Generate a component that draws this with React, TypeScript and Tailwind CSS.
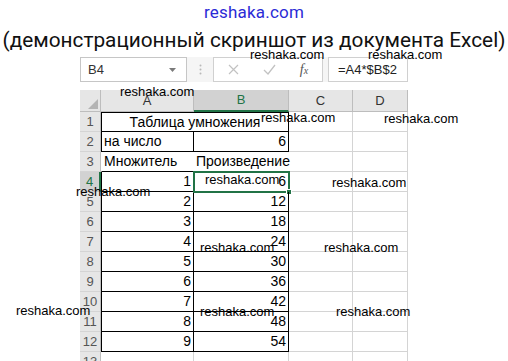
import React from "react";

const cellFont = "font-['Liberation_Sans',Arial,sans-serif]";

function Watermark({ x, y }: { x: number; y: number }) {
  return (
    <div
      className="absolute text-[13px] leading-[13px] text-black whitespace-nowrap font-['Liberation_Sans',Arial,sans-serif] pointer-events-none"
      style={{ left: x, top: y }}
    >
      reshaka.com
    </div>
  );
}

function RowHeader({ n, selected }: { n: number; selected?: boolean }) {
  return selected ? (
    <div className="w-[21px] h-[20px] box-border border-b border-b-[#c8c8c8] border-r-2 border-r-[#217346] bg-[#d2d2d2] flex items-center justify-center text-[13px] text-[#217346]">
      {n}
    </div>
  ) : (
    <div className="w-[21px] h-[20px] box-border border-b border-b-[#d4d4d4] border-r border-r-[#bdbdbd] bg-[#e6e6e6] flex items-center justify-center text-[13px] text-[#555555]">
      {n}
    </div>
  );
}

function GreyCells() {
  return (
    <>
      <div className="w-[64px] h-[20px] box-border border-r border-b border-r-[#d4d4d4] border-b-[#d4d4d4]" />
      <div className="w-[55px] h-[20px] box-border border-r border-b border-r-[#d4d4d4] border-b-[#d4d4d4]" />
    </>
  );
}

function DataRow({ n, a, b }: { n: number; a: number; b: number }) {
  const sel = n === 4;
  return (
    <div className="flex">
      <RowHeader n={n} selected={sel} />
      <div className="w-[93px] h-[20px] box-border border-l border-r border-b border-l-black border-r-black border-b-black flex items-center justify-end pr-[2px] text-[14px]">
        {a}
      </div>
      <div className="relative w-[95px] h-[20px] box-border border-r border-b border-r-black border-b-black flex items-center justify-end pr-[2px] text-[14px]">
        {b}
        {sel && (
          <div className="absolute left-[-1px] top-[-1px] right-[-2px] bottom-[-2px] border-2 border-[#217346]">
            <div className="absolute right-[-4px] bottom-[-4px] w-[6px] h-[6px] bg-[#217346] border border-white" />
          </div>
        )}
      </div>
      <GreyCells />
    </div>
  );
}

export default function App() {
  const data = [1, 2, 3, 4, 5, 6, 7, 8, 9];
  return (
    <div className="relative w-[508px] h-[361px] overflow-hidden bg-white">
      <div className="h-[24px] flex items-center justify-center">
        <span className="text-[17px] leading-none text-[#2b2bd6] font-['Roboto',sans-serif] tracking-[0.2px]">
          reshaka.com
        </span>
      </div>
      <div className="h-[33px] flex items-center justify-center">
        <span className="text-[20.8px] leading-none text-[#111111] whitespace-nowrap font-['Roboto',sans-serif]">
          (демонстрационный скриншот из документа Excel)
        </span>
      </div>

      <div className={`ml-[80px] w-[328px] ${cellFont}`}>
        {/* formula bar */}
        <div className="flex h-[25px] bg-[#f5f5f5]">
          <div className="w-[107px] box-border border border-[#c6c6c6] bg-white flex items-center justify-between pl-[7px] pr-[10px] text-[13px] text-[#333333]">
            <span>B4</span>
            <svg width="7" height="4" viewBox="0 0 7 4">
              <path d="M0 0 L7 0 L3.5 4 Z" fill="#7a7a7a" />
            </svg>
          </div>
          <div className="w-[26px] flex items-center justify-center">
            <svg width="3" height="11" viewBox="0 0 3 11">
              <circle cx="1.5" cy="1.5" r="1" fill="#b9b9b9" />
              <circle cx="1.5" cy="5.5" r="1" fill="#b9b9b9" />
              <circle cx="1.5" cy="9.5" r="1" fill="#b9b9b9" />
            </svg>
          </div>
          <div className="w-[110px] box-border border border-[#d0d0d0] bg-white flex items-center">
            <div className="w-[38px] flex justify-center">
              <svg width="11" height="11" viewBox="0 0 11 11">
                <path d="M1 1 L10 10 M10 1 L1 10" stroke="#c2c2c2" strokeWidth="1.2" />
              </svg>
            </div>
            <div className="w-[34px] flex justify-center">
              <svg width="13" height="11" viewBox="0 0 13 11">
                <path d="M1 6 L5 10 L12 1" stroke="#c2c2c2" strokeWidth="1.3" fill="none" />
              </svg>
            </div>
            <div className="w-[36px] flex justify-center">
              <span className="italic text-[14px] text-[#555555] font-['Liberation_Serif',serif] leading-none">
                f<span className="text-[10px]">x</span>
              </span>
            </div>
          </div>
          <div className="w-[5px]" />
          <div className="w-[80px] box-border border border-[#d0d0d0] bg-white flex items-center pl-[9px] text-[13px] text-[#222222]">
            =A4*$B$2
          </div>
        </div>

        <div className="h-[8px]" />

        {/* column headers */}
        <div className="flex h-[22px] text-[13px] text-[#333333]">
          <div className="relative w-[21px] h-[22px] box-border border-r border-b border-r-[#bdbdbd] border-b-[#bdbdbd] bg-[#e6e6e6]">
            <svg className="absolute right-[2px] bottom-[2px]" width="10" height="10" viewBox="0 0 10 10">
              <path d="M10 0 L10 10 L0 10 Z" fill="#b4b4b4" />
            </svg>
          </div>
          <div className="w-[93px] h-[22px] box-border border-r border-b border-r-[#bdbdbd] border-b-[#bdbdbd] bg-[#e6e6e6] flex items-center justify-center">
            A
          </div>
          <div className="w-[95px] h-[22px] box-border border-r border-b-2 border-r-[#bdbdbd] border-b-[#217346] bg-[#d2d2d2] flex items-center justify-center text-[#217346]">
            B
          </div>
          <div className="w-[64px] h-[22px] box-border border-r border-b border-r-[#bdbdbd] border-b-[#bdbdbd] bg-[#e6e6e6] flex items-center justify-center">
            C
          </div>
          <div className="w-[55px] h-[22px] box-border border-r border-b border-r-[#bdbdbd] border-b-[#bdbdbd] bg-[#e6e6e6] flex items-center justify-center">
            D
          </div>
        </div>

        {/* row 1 */}
        <div className="flex">
          <RowHeader n={1} />
          <div className="w-[188px] h-[20px] box-border border border-black flex items-center justify-center text-[14px]">
            Таблица умножения
          </div>
          <GreyCells />
        </div>
        {/* row 2 */}
        <div className="flex">
          <RowHeader n={2} />
          <div className="w-[93px] h-[20px] box-border border-l border-r border-b border-l-black border-r-black border-b-black flex items-center pl-[2px] text-[14px]">
            на число
          </div>
          <div className="w-[95px] h-[20px] box-border border-r border-b border-r-black border-b-black flex items-center justify-end pr-[2px] text-[14px]">
            6
          </div>
          <GreyCells />
        </div>
        {/* row 3 */}
        <div className="flex">
          <RowHeader n={3} />
          <div className="w-[93px] h-[20px] box-border border-l border-r border-b border-l-transparent border-r-white border-b-black flex items-center pl-[2px] text-[14px]">
            Множитель
          </div>
          <div className="w-[95px] h-[20px] box-border border-r border-b border-r-white border-b-black flex items-center pl-[2px] text-[14px] whitespace-nowrap">
            Произведение
          </div>
          <GreyCells />
        </div>
        {data.map((a) => (
          <DataRow key={a} n={a + 3} a={a} b={a * 6} />
        ))}
        {/* row 13 */}
        <div className="flex">
          <RowHeader n={13} />
          <div className="w-[93px] h-[20px] box-border border-l border-r border-b border-l-transparent border-r-[#d4d4d4] border-b-[#d4d4d4]" />
          <div className="w-[95px] h-[20px] box-border border-r border-b border-r-[#d4d4d4] border-b-[#d4d4d4]" />
          <GreyCells />
        </div>
      </div>

      {/* watermarks */}
      <Watermark x={250} y={48} />
      <Watermark x={368} y={48} />
      <Watermark x={120} y={85} />
      <Watermark x={261} y={111} />
      <Watermark x={384} y={112} />
      <Watermark x={332} y={176} />
      <Watermark x={205} y={173} />
      <Watermark x={76} y={185} />
      <Watermark x={200} y={241} />
      <Watermark x={324} y={241} />
      <Watermark x={16} y={304} />
      <Watermark x={200} y={305} />
      <Watermark x={336} y={305} />
    </div>
  );
}
